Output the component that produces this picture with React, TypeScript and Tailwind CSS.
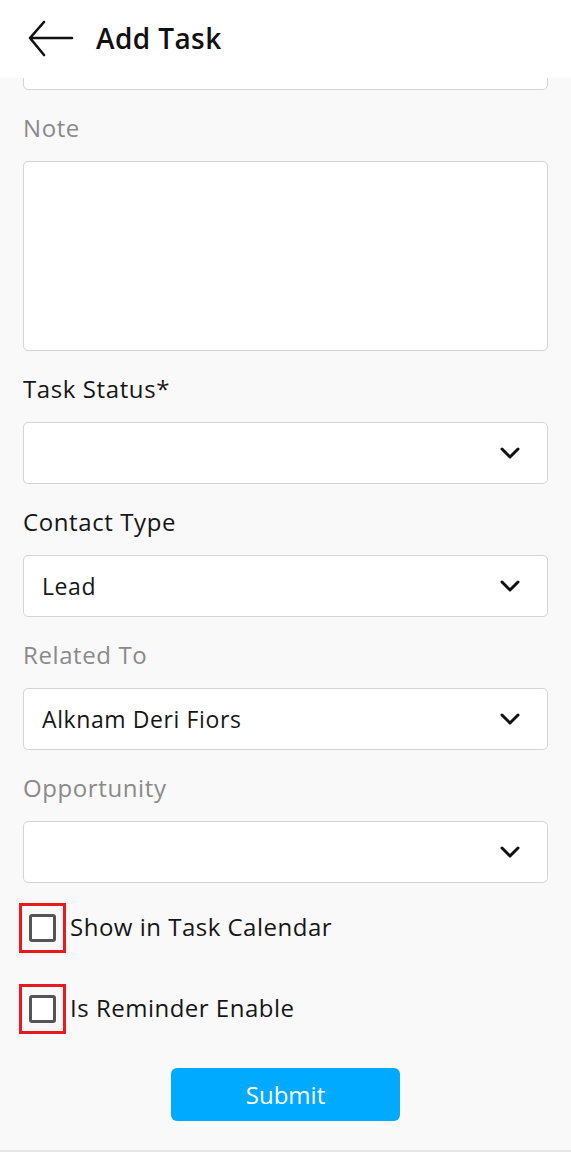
const font = { fontFamily: '"Open Sans", "Noto Sans", sans-serif' };

const Chevron = () => (
  <svg width="20" height="12" viewBox="0 0 20 12" fill="none">
    <polyline points="2,2 10,10 18,2" stroke="#111" strokeWidth="3" strokeLinecap="round" strokeLinejoin="round" />
  </svg>
);

const Label = ({ text, muted }: { text: string; muted?: boolean }) => (
  <div className={`mt-[23px] mb-[18px] h-[30px] flex items-center text-[24px] tracking-[0.6px] ${muted ? 'text-[#8a8a8a]' : 'text-[#161616]'}`}>
    {text}
  </div>
);

const Select = ({ value }: { value?: string }) => (
  <div className="h-[62px] bg-white border border-[#d4d4d4] rounded-[5px] flex items-center justify-between pl-[18px] pr-[27px]">
    <span className="text-[23px] tracking-[0.6px] text-[#161616]">{value}</span>
    <Chevron />
  </div>
);

const Check = ({ text }: { text: string }) => (
  <div className="flex items-center h-[50px]">
    <div className="w-[47px] h-full border-[3px] border-[#e8191f] flex items-center justify-center -ml-[4px]">
      <div className="w-[27px] h-[28px] border-[3px] border-[#555] rounded-[3px] bg-white" />
    </div>
    <span className="ml-[4px] text-[24px] tracking-[0.5px] text-[#161616] -mt-[3px]">{text}</span>
  </div>
);

export default function App() {
  return (
    <div style={font} className="w-[571px] h-[1152px] flex flex-col bg-[#f9f9f9] overflow-hidden">
      <header className="h-[78px] shrink-0 bg-white flex items-center pl-[28px] relative z-10">
        <svg width="46" height="38" viewBox="0 0 46 38" fill="none">
          <path d="M44 18H2M16 2L2 18L16 35" stroke="#111" strokeWidth="2.6" strokeLinecap="round" strokeLinejoin="round" />
        </svg>
        <h1 className="ml-[22px] -mt-[2px] text-[28px] font-semibold tracking-[0.4px] text-[#111]">Add Task</h1>
      </header>

      <main className="flex-1 overflow-hidden px-[23px] border-b-2 border-[#e6e6e6]">
        <div className="-mt-[50px] h-[62px] bg-white border border-[#d4d4d4] rounded-[5px]" />

        <Label text="Note" muted />
        <div className="h-[190px] bg-white border border-[#d4d4d4] rounded-[5px]" />

        <Label text="Task Status*" />
        <Select />

        <Label text="Contact Type" />
        <Select value="Lead" />

        <Label text="Related To" muted />
        <Select value="Alknam Deri Fiors" />

        <Label text="Opportunity" muted />
        <Select />

        <div className="mt-[20px] flex flex-col gap-[31px]">
          <Check text="Show in Task Calendar" />
          <Check text="Is Reminder Enable" />
        </div>

        <div className="flex justify-center mt-[34px]">
          <button className="w-[229px] h-[53px] rounded-[6px] bg-[#00aaff] text-white text-[24px] font-medium">
            Submit
          </button>
        </div>
      </main>
    </div>
  );
}
